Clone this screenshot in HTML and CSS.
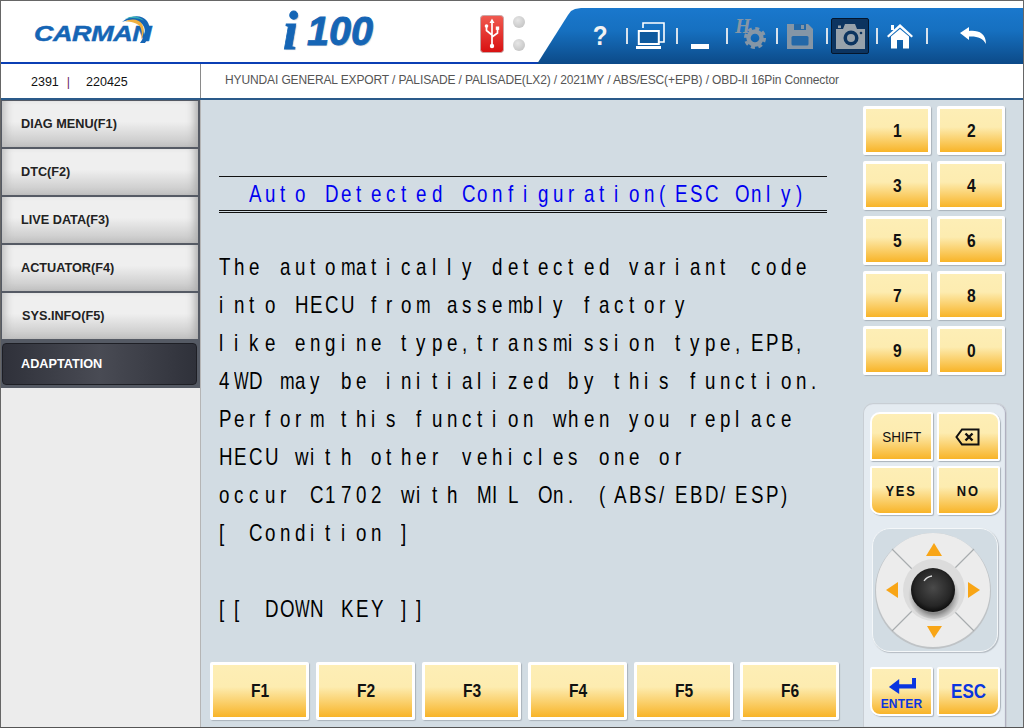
FILE: index.html
```html
<!DOCTYPE html>
<html lang="en">
<head>
<meta charset="utf-8">
<title>CARMAN i100</title>
<link rel="stylesheet" href="styles.css">
</head>
<body>
<div class="app">
  <header class="header">
    <div class="brand">
      <span class="brand-word">CARMAN</span>
      <svg class="brand-arc" width="34" height="30" viewBox="0 0 34 30"><path d="M2 8C10 1 22 0 27 7 31 13 31 21 25 29L20 29C26 21 26 14 22 10 17 6 9 5 2 8Z" fill="#1565b5"/><path d="M4 8C11 4 19 5 22 10 25 15 24 20 21 26 23 17 21 12 17 10 13 8 8 7 4 8Z" fill="#f0b040"/><path d="M5 5C12 1 20 2 24 7 20 4 12 3 5 5Z" fill="#35b0b8"/></svg>
    </div>
    <div class="model"><span class="model-i">i</span><span class="model-num">100</span></div>
    <svg class="usb" width="24" height="38" viewBox="0 0 24 38"><defs><linearGradient id="usbRed" x1="0" y1="0" x2="0" y2="1"><stop offset="0" stop-color="#f05a50"/><stop offset="1" stop-color="#d81010"/></linearGradient></defs><rect x=".5" y=".5" width="23" height="37" rx="3" fill="url(#usbRed)" stroke="#c8a8a8"/><path d="M12 5V29M12 27V31M12 20L6.500 15.500V12M12 22L17.500 18V14" stroke="#fff" stroke-width="1.700" fill="none"/><circle cx="12" cy="31" r="2.200" fill="#fff"/><path d="M12 3.500L14.500 8H9.500Z" fill="#fff"/><circle cx="6.500" cy="11" r="1.800" fill="#fff"/><rect x="15.800" y="11.500" width="3.400" height="3.400" fill="#fff"/></svg>
    <div class="leds"><span class="led"></span><span class="led"></span></div>
    <nav class="toolbar">
      <div class="tool"><span class="tool-help">?</span></div>
      <div class="tool"><svg width="30" height="28" viewBox="0 0 30 28"><path d="M8 6V1H29V20H23" fill="none" stroke="#fff" stroke-width="1.600"/><rect x="3.800" y="9" width="20" height="13" fill="#0f5a9e" stroke="#fff" stroke-width="2"/><rect x="1" y="24" width="25" height="3" fill="#fff"/></svg></div>
      <div class="tool"><span class="tool-min"></span></div>
      <div class="tool"><span class="tool-h">H</span><svg class="tool-gear" width="26" height="26" viewBox="0 0 30 30"><circle cx="15" cy="15" r="7.500" fill="none" stroke="#8596a6" stroke-width="5"/><circle cx="15" cy="15" r="11" fill="none" stroke="#8596a6" stroke-width="3.500" stroke-dasharray="4.600 4.040"/></svg></div>
      <div class="tool"><svg width="26" height="26" viewBox="0 0 26 26"><path d="M0 1H21L26 6V26H0Z" fill="#8596a6"/><rect x="7" y="1" width="12" height="6" fill="#2368a8"/><rect x="14" y="2" width="3" height="4" fill="#8596a6"/><rect x="4.500" y="13" width="17" height="9.500" rx="1.500" fill="#2368a8"/></svg></div>
      <div class="tool"><div class="tool-active"><svg width="30" height="26" viewBox="0 0 30 26"><path d="M1 6H8L10 1H20L22 6H30V26H1Z" fill="#98a2ab"/><circle cx="16" cy="15" r="7.500" fill="#0c3460"/><circle cx="16" cy="15" r="4" fill="#98a2ab"/><rect x="3" y="2.500" width="3" height="2.500" fill="#98a2ab"/><circle cx="26" cy="10" r="1.300" fill="#0c3460"/></svg></div></div>
      <div class="tool"><svg width="28" height="26" viewBox="0 0 28 26"><path d="M14 1L27 13 25.500 14.500 14 4.500 2.500 14.500 1 13Z" fill="#fff"/><path d="M5 13.500L14 6 23 13.500V25.500H17V17H11V25.500H5Z" fill="#fff"/><rect x="5" y="2" width="3" height="5" fill="#fff"/></svg></div>
      <div class="tool tool-last"><svg width="28" height="18" viewBox="0 0 28 18"><path d="M1 6L10 0V4C19 3 27 6 27 17 24 11 18 9 10 9.500V13Z" fill="#fff"/></svg></div>
    </nav>
  </header>

  <div class="info">
    <div class="info-id">2391<span class="info-sep">|</span>220425</div>
    <div class="info-path">HYUNDAI GENERAL EXPORT / PALISADE / PALISADE(LX2) / 2021MY / ABS/ESC(+EPB) / OBD-II 16Pin Connector</div>
  </div>

  <div class="body">
    <aside class="side">
      <div class="side-list">
        <div class="side-btn">DIAG MENU(F1)</div>
        <div class="side-btn">DTC(F2)</div>
        <div class="side-btn">LIVE DATA(F3)</div>
        <div class="side-btn">ACTUATOR(F4)</div>
        <div class="side-btn side-btn-sys">SYS.INFO(F5)</div>
        <div class="side-btn side-btn-on">ADAPTATION</div>
      </div>
    </aside>

    <main class="main">
      <section class="screen">
        <div class="screen-title mono">  Auto Detected Configuration(ESC Only)</div>
        <div class="screen-body">
          <div class="mono">The automatically detected variant code</div>
          <div class="mono">into HECU from assembly factory</div>
          <div class="mono">like engine type,transmission type,EPB,</div>
          <div class="mono">4WD may be initialized by this function.</div>
          <div class="mono">Perform this function when you replace</div>
          <div class="mono">HECU with other vehicles one or</div>
          <div class="mono">occur C1702 with MIL On. (ABS/EBD/ESP)</div>
          <div class="mono">[ Condition ]</div>
          <div class="mono"> </div>
          <div class="mono">[[ DOWN KEY ]]</div>
        </div>
      </section>
      <div class="fkeys">
        <div class="key fkey"><span class="cap">F1</span></div>
        <div class="key fkey"><span class="cap">F2</span></div>
        <div class="key fkey"><span class="cap">F3</span></div>
        <div class="key fkey"><span class="cap">F4</span></div>
        <div class="key fkey"><span class="cap">F5</span></div>
        <div class="key fkey"><span class="cap">F6</span></div>
      </div>
    </main>

    <aside class="pad">
      <div class="nums">
        <div class="key"><span class="cap">1</span></div>
        <div class="key"><span class="cap">2</span></div>
        <div class="key"><span class="cap">3</span></div>
        <div class="key"><span class="cap">4</span></div>
        <div class="key"><span class="cap">5</span></div>
        <div class="key"><span class="cap">6</span></div>
        <div class="key"><span class="cap">7</span></div>
        <div class="key"><span class="cap">8</span></div>
        <div class="key"><span class="cap">9</span></div>
        <div class="key"><span class="cap">0</span></div>
      </div>
      <div class="panel">
        <div class="panel-keys">
          <div class="key pkey tl"><span class="cap cap-shift">SHIFT</span></div>
          <div class="key pkey tr"><svg class="icon-back" width="25" height="18" viewBox="0 0 25 18"><path d="M7 1.500H23.500V16.500H7L1.500 9Z" fill="none" stroke="#111" stroke-width="2"/><path d="M10.500 5.500L17.500 12.500M17.500 5.500L10.500 12.500" stroke="#111" stroke-width="2.400"/></svg></div>
          <div class="key pkey bl"><span class="cap cap-yes">YES</span></div>
          <div class="key pkey br"><span class="cap cap-yes">NO</span></div>
        </div>
        <div class="joy">
          <svg width="126" height="124" viewBox="0 0 126 124">
            <defs>
              <radialGradient id="knob" cx=".5" cy=".45" r=".55"><stop offset="0" stop-color="#4a4a4a"/><stop offset=".75" stop-color="#262626"/><stop offset="1" stop-color="#0c0c0c"/></radialGradient>
              <radialGradient id="knobShadow" cx=".5" cy=".55" r=".5"><stop offset=".7" stop-color="#555" stop-opacity=".6"/><stop offset="1" stop-color="#888" stop-opacity="0"/></radialGradient>
            </defs>
            <circle cx="61" cy="63" r="58" fill="#bfc3c6"/>
            <circle cx="61" cy="62" r="57" fill="#ececec"/>
            <path d="M20 21L44 45M102 21L78 45M20 103L44 79M102 103L78 79" stroke="#a8acae" stroke-width="1.200"/>
            <circle cx="62" cy="62" r="31" fill="#dcdcdc"/>
            <circle cx="62" cy="65" r="26" fill="url(#knobShadow)"/>
            <circle cx="61" cy="62" r="22" fill="url(#knob)"/>
            <path d="M52 53C54 50 57 48.500 60 48" stroke="#ddd" stroke-width="1.300" fill="none"/>
            <path d="M62 15L70 28H54Z" fill="#f8a516"/>
            <path d="M62 110L55 98H70Z" fill="#f8a516"/>
            <path d="M14 62L26 54V70Z" fill="#f8a516"/>
            <path d="M108 62L96 54V70Z" fill="#f8a516"/>
          </svg>
        </div>
        <div class="panel-keys">
          <div class="key pkey pkey-enter bl">
            <svg width="28" height="18" viewBox="0 0 30 19"><path d="M28 1V10H9" fill="none" stroke="#0a35e0" stroke-width="4.500"/><path d="M1 10.500L12 2V18Z" fill="#0a35e0"/></svg>
            <span class="cap-enter">ENTER</span>
          </div>
          <div class="key pkey br"><span class="cap cap-esc">ESC</span></div>
        </div>
      </div>
    </aside>
  </div>
</div>
<script src="main.js"></script>
</body>
</html>
```
FILE: styles.css
```css
* { box-sizing: border-box; }
html, body { margin: 0; padding: 0; }
body { font-family: "Liberation Sans", Arial, sans-serif; background: #fff; }
.app { width: 1024px; height: 728px; border: 1px solid #666; border-bottom-color: #555; display: flex; flex-direction: column; overflow: hidden; background: #fff; }

.header { position: relative; height: 63px; flex: none; display: flex; align-items: flex-start; border-bottom: 2px solid #0b3fb4; }
.brand { width: 232px; height: 61px; padding: 18px 0 0 33px; position: relative; flex: none; }
.brand-word { display: inline-block; font-size: 30px; line-height: 30px; font-weight: 700; font-style: italic; color: #1565b5; -webkit-text-stroke: .6px #1565b5; transform: scaleX(.9) scaleY(.72); transform-origin: left center; letter-spacing: -.5px; }
.brand-arc { position: absolute; left: 119px; top: 13px; }
.model { width: 247px; height: 61px; padding: 6px 0 0 50px; display: flex; align-items: flex-start; flex: none; color: #1565b5; text-shadow: 1px 1px 1px #c9ced4; }
.model-i { font-family: "Liberation Serif", serif; font-style: italic; font-weight: 700; font-size: 54px; line-height: 48px; width: 24px; -webkit-text-stroke: .8px #1565b5; }
.model-num { font-weight: 700; font-style: italic; font-size: 40px; line-height: 48px; display: inline-block; -webkit-text-stroke: .9px #1565b5; transform: scaleX(.99); transform-origin: left; }
.usb { margin-top: 14px; flex: none; }
.leds { margin: 15px 0 0 9px; display: flex; flex-direction: column; gap: 11px; flex: none; }
.led { width: 12px; height: 12px; border-radius: 50%; background: radial-gradient(circle at 40% 35%, #e6e6e6, #bcbcbc); }

.toolbar { position: absolute; left: 536px; top: 7px; right: 0; height: 56px; padding-left: 40px; display: flex; align-items: center; background: linear-gradient(#1a78cd 0, #1670c0 40%, #0c4a88 100%); clip-path: polygon(0 56px, 31px 7px, 34px 3px, 38px 1px, 44px 0, 100% 0, 100% 56px); }
.tool { position: relative; width: 50px; height: 56px; padding-right: 4px; display: flex; align-items: center; justify-content: center; flex: none; }
.tool::after { content: ""; position: absolute; right: -1px; top: 20px; width: 2px; height: 16px; background: #d8e2ec; }
.tool-last { width: 96px; }
.tool-last::after { display: none; }
.tool-help { font-size: 27px; line-height: 30px; font-weight: 700; color: #f2f2f2; transform: scaleX(.9); }
.tool-min { width: 18px; height: 5px; margin-top: 21px; background: #fff; }
.tool-h { position: absolute; left: 8px; top: 8px; font-family: "Liberation Serif", serif; font-style: italic; font-weight: 700; font-size: 20px; line-height: 20px; color: #8596a6; }
.tool-gear { margin: 3px 0 0 10px; }
.tool-active { width: 38px; height: 36px; margin-top: -1px; display: flex; align-items: center; justify-content: center; background: #0c3460; border: 1px solid #04162c; border-radius: 2px; }

.info { height: 36px; flex: none; display: flex; font-size: 12.500px; border-bottom: 2px solid #2a5a8a; }
.info-id { width: 200px; padding: 11px 0 0 30px; color: #111; border-right: 1px solid #8a8a8a; white-space: pre; font-size: 12.500px; }
.info-sep { margin: 0 16px 0 8px; color: #6a1a6a; }
.info-path { padding: 9px 0 0 24px; color: #555; white-space: nowrap; font-size: 12px; letter-spacing: -.12px; }

.body { flex: 1; min-height: 0; display: flex; }
.side { width: 200px; flex: none; background: #ececec; border-right: 1px solid #b5b5b5; }
.side-list { background: #555a64; padding: 1px 2px 3px 1px; display: flex; flex-direction: column; gap: 2px; }
.side-btn { height: 46px; padding-left: 19px; display: flex; align-items: center; font-size: 12.700px; font-weight: 700; color: #222; background: linear-gradient(#efefef 0, #efefef 45%, #c4c4c4 100%); box-shadow: inset 8px 0 8px -5px #bbb, inset -8px -2px 8px -5px #aaa; }
.side-btn-sys { padding-left: 20px; }
.side-btn-on { margin-top: 2px; margin-right: 1px; padding-left: 18px; height: 42px; color: #fff; background: linear-gradient(90deg, #2f313a, #494b54 50%, #2f313a); border: 1px solid #1e1f25; border-radius: 4px; box-shadow: none; }

.main { width: 655px; flex: none; display: flex; flex-direction: column; background: #d2dce3; }
.screen { flex: 1; padding: 76px 0 0 18px; color: #000; }
.screen-title { width: 608px; height: 37px; padding-top: 1px; color: #0000f0; border-top: 1px solid #111; border-bottom: 3px double #111; line-height: 32px; }
.screen-body { margin-top: 35px; }
.screen-body .mono { height: 38px; line-height: 38px; }
.mono { font-size: 24px; white-space: pre; }
.cell { display: inline-block; width: 15.2px; transform: scaleX(.78); transform-origin: left center; }

.key { display: flex; align-items: center; justify-content: center; background: linear-gradient(#fdeeb6 0, #fdecb0 42%, #f8b428 100%); border: 3px solid #fff; border-radius: 2px; box-shadow: 1px 1px 1px #a9b2ba; color: #111; }
.cap { display: inline-block; font-size: 19px; font-weight: 700; transform: scaleX(.82); }
.fkeys { display: flex; gap: 7px; padding: 0 0 7px 9px; }
.fkey { width: 99px; height: 58px; padding-left: 2px; }

.pad { flex: 1; background: #d2dce3; padding: 6px 0 0 7px; display: flex; flex-direction: column; }
.nums { display: grid; grid-template-columns: 68px 68px; grid-auto-rows: 49px; gap: 6px; }
.panel { width: 144px; height: 324px; margin: 28px 0 0; padding: 8px 6px 0 6px; background: #e4ebf1; border: 1px solid #c8ced4; border-bottom: 0; border-radius: 10px 10px 0 0; box-shadow: inset -1px 0 1px #aab; }
.panel-keys { display: grid; grid-template-columns: 63px 63px; grid-auto-rows: 49px; gap: 5px 4px; }
.pkey { border-width: 2px; }
.tl { border-top-left-radius: 10px; }
.tr { border-top-right-radius: 10px; }
.bl { border-bottom-left-radius: 10px; }
.br { border-bottom-right-radius: 10px; }
.icon-back { margin-right: 3px; }
.cap-shift { font-size: 15px; font-weight: 400; transform: scaleX(.9); }
.cap-yes { font-size: 15px; letter-spacing: 2px; transform: scaleX(.86); }
.cap-esc { font-size: 20px; color: #0a35e0; transform: scaleX(.85); }
.pkey-enter { flex-direction: column; gap: 3px; padding-top: 3px; }
.cap-enter { font-size: 12px; line-height: 12px; font-weight: 700; color: #0a35e0; letter-spacing: .2px; }
.joy { width: 126px; height: 124px; margin: 13px 0 15px 2px; background: #d2dce3; border: 1px solid #f4f7f9; border-radius: 18px; box-shadow: 1px 1px 1px #b4bbc2; }
.joy svg { display: block; margin: -1px; }
```
FILE: main.js
```js
// The device screen draws every character in a fixed cell, so split each line into cells.
// Wide glyphs (M, W) are squeezed further so that they stay inside their cell.
var pen = document.createElement('canvas').getContext('2d');
pen.font = '24px "Liberation Sans"';
document.querySelectorAll('.mono').forEach(function (line) {
  var text = line.textContent;
  line.textContent = '';
  Array.from(text).forEach(function (ch) {
    var cell = document.createElement('span');
    cell.className = 'cell';
    cell.textContent = ch;
    var full = pen.measureText(ch).width;
    if (full * 0.78 > 14.6) {
      cell.style.transform = 'scaleX(' + (14.6 / full).toFixed(3) + ')';
    }
    line.appendChild(cell);
  });
});
```
